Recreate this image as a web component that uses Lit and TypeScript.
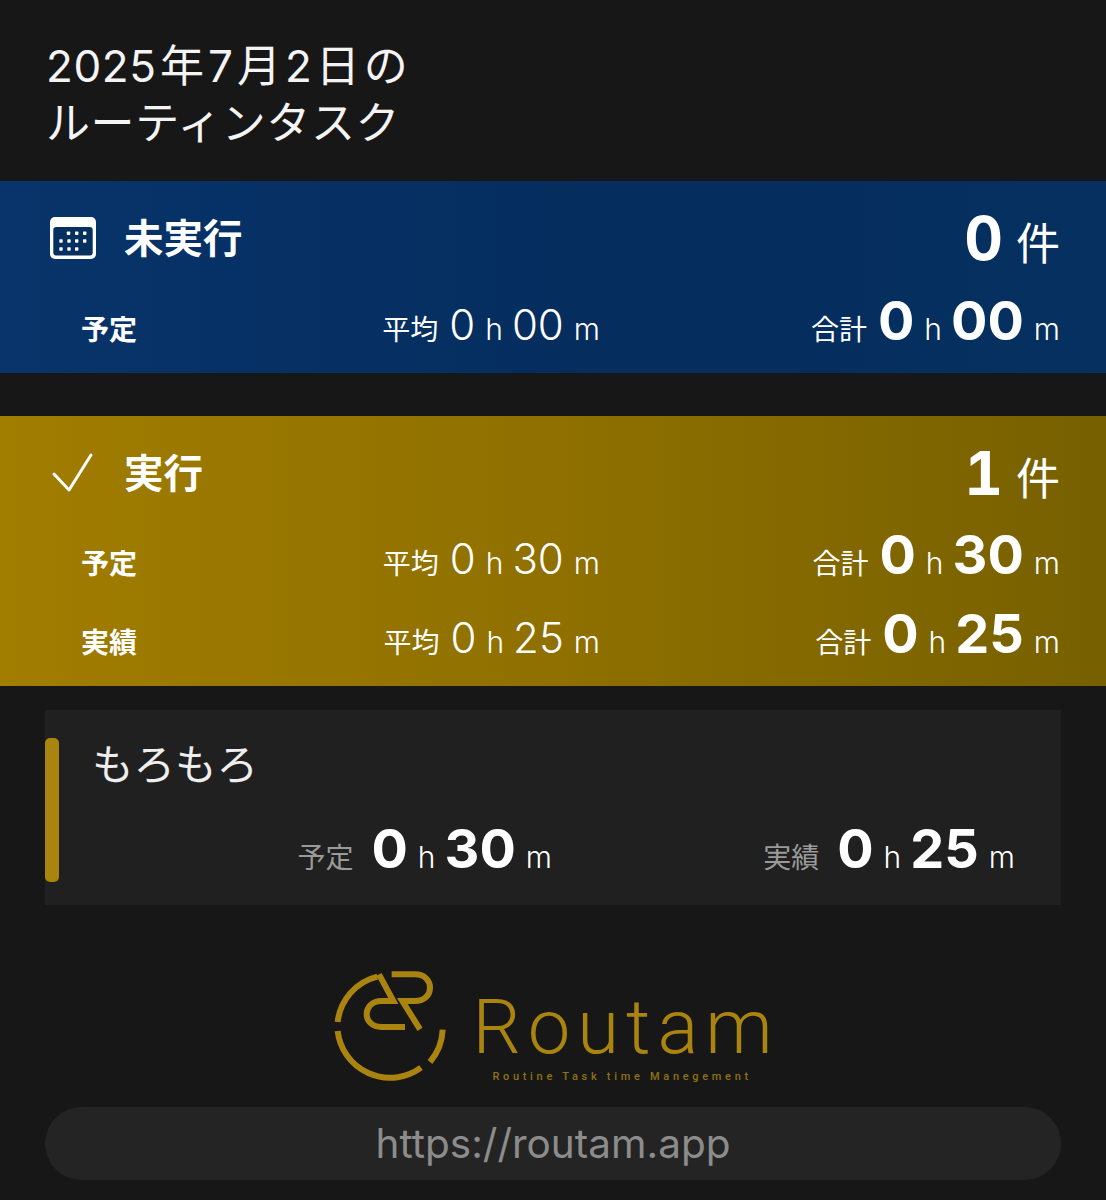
import { LitElement, html, css, svg } from 'lit';
import { customElement } from 'lit/decorators.js';

const calendarIcon = html`<svg class="icon" width="48" height="44" viewBox="0 0 48 44">
  <rect x="1" y="1" width="46" height="42" rx="5" fill="#fff"/>
  <rect x="4.3" y="11" width="39.4" height="28.5" rx="3" fill="#06305f"/>
  ${[
    [19.5, 17.3], [27.7, 17.3], [35.7, 17.3],
    [12, 25], [20, 25], [27.7, 25], [35.7, 25],
    [12, 33], [20, 33], [27.7, 33],
  ].map(([x, y]) => svg`<rect x=${x - 1.7} y=${y - 1.7} width="3.4" height="3.4" rx=".7" fill="#fff"/>`)}
</svg>`;

const checkIcon = html`<svg class="icon" width="48" height="44" viewBox="0 0 48 44">
  <path d="M5 23 L20 39 L42 4" fill="none" stroke="#fff" stroke-width="3" stroke-linecap="round" stroke-linejoin="round"/>
</svg>`;

// traced from the reference mark, coordinates are 3x px
const logoMark = html`<svg class="mark" width="120" height="120" viewBox="30 20 360 360">
  <g fill="none" stroke="#a9840f" stroke-width="18">
    <path d="M53 188 A158 158 0 0 1 172 52"/>
    <path d="M53 215 A158 158 0 0 0 303 325"/>
    <path d="M368 211 A158 158 0 0 1 330 308"/>
    <path d="M215 45 H285 C345 45 345 125 285 125 H247 L300 210"/>
    <path d="M177 45 L220 125 H185 C125 125 125 203 185 203 H255"/>
  </g>
</svg>`;

type Time = [string, string];

@customElement('app-root')
export class AppRoot extends LitElement {
  static styles = css`
    :host {
      display: block;
      height: 1200px;
      overflow: hidden;
      background: #171717;
      color: #fff;
      font-family: Inter, "Noto Sans CJK JP", sans-serif;
    }
    .title {
      margin: 0;
      padding: 38px 46px 29px;
      font-size: 44px;
      line-height: 57px;
      font-weight: 400;
      letter-spacing: 0.6px;
      color: #f4f4f4;
    }
    .title .sp { margin: 0 3.4px; }
    .band { display: flex; flex-direction: column; }
    .band.blue {
      background: linear-gradient(90deg, #08346b 0%, #052d5e 55%, #05305f 100%);
      margin-bottom: 43px;
      height: 192px;
    }
    .band.gold {
      background: linear-gradient(90deg, #a17d00 0%, #8f7000 50%, #776000 100%);
      height: 270px;
    }
    .head {
      flex: none;
      height: 114px;
      display: flex;
      align-items: center;
      padding: 0 46px 0 49px;
    }
    .head .icon { flex: none; }
    .head .name { margin: -5px 0 0 27px; font-size: 39.5px; font-weight: 700; }
    .head .count { margin-left: auto; display: flex; align-items: baseline; }
    .count b { font-size: 60px; font-weight: 700; font-variant-numeric: tabular-nums; }
    .count span { margin-left: 13px; font-size: 44px; font-weight: 400; }
    .band.blue .row { margin-top: -7px; }
    .band.gold .row { margin-top: -8px; }
    .band.gold .row + .row { margin-top: 23px; }
    .row {
      height: 56px;
      display: grid;
      grid-template-columns: 303px 216px 1fr;
      align-items: baseline;
      padding: 0 46px 0 81px;
    }
    .row .label { font-size: 28px; font-weight: 700; }
    .time { display: flex; align-items: baseline; justify-self: end; white-space: nowrap; }
    .time .cap { font-size: 28px; margin-right: 11px; }
    .time .num { font-size: 42px; font-weight: 350; }
    .time .unit { font-size: 30px; font-weight: 300; margin: 0 9px 0 10px; }
    .time .unit:last-child { margin-right: 0; }
    .time.big .num { font-size: 54px; font-weight: 700; }
    .card {
      margin: 24px 45px 0;
      height: 195px;
      background: #202020;
      display: flex;
    }
    .card .bar {
      flex: none;
      width: 14px;
      margin: 28px 0 23px;
      border-radius: 5px;
      background: #a9840f;
    }
    .card .body { flex: 1; padding-left: 33px; }
    .card .name {
      margin-top: 28px;
      font-size: 41.5px;
      line-height: 54px;
      font-weight: 400;
      color: #eee;
    }
    .card .times {
      margin-top: 24px;
      display: grid;
      grid-template-columns: 460px 463px;
    }
    .card .cap { color: #9a9a9a; margin-right: 18px; }
    .logo {
      margin-top: 61px;
      height: 128px;
      display: flex;
      justify-content: center;
      color: #a9840f;
      padding-left: 4px;
    }
    .logo .words { margin-left: 22px; display: flex; flex-direction: column; }
    .logo .big {
      font-size: 76px;
      line-height: 80px;
      margin-top: 21px;
      font-weight: 350;
      letter-spacing: 7px;
      font-family: Roboto, sans-serif;
    }
    .logo .small {
      font-size: 11px;
      line-height: 14px;
      letter-spacing: 3.7px;
      margin: 3px 0 0 20px;
      font-weight: 500;
      color: #8f7213;
      font-family: Roboto, sans-serif;
    }
    .url {
      margin: 13px 45px 0;
      height: 73px;
      border-radius: 37px;
      background: #242424;
      display: flex;
      align-items: center;
      justify-content: center;
      font-size: 40.5px;
      color: #8c8c8c;
    }
  `;

  private time(cap: string, [h, m]: Time, big = false) {
    return html`<div class="time ${big ? 'big' : ''}">
      <span class="cap">${cap}</span>
      <span class="num">${h}</span><span class="unit">h</span>
      <span class="num">${m}</span><span class="unit">m</span>
    </div>`;
  }

  private row(label: string, avg: Time, total: Time) {
    return html`<div class="row">
      <span class="label">${label}</span>
      ${this.time('平均', avg)}
      ${this.time('合計', total, true)}
    </div>`;
  }

  render() {
    return html`
      <h1 class="title">2025<span class="sp">年</span>7<span class="sp">月</span>2<span class="sp">日</span>の<br />ルーティンタスク</h1>

      <section class="band blue">
        <div class="head">
          ${calendarIcon}
          <span class="name">未実行</span>
          <div class="count"><b>0</b><span>件</span></div>
        </div>
        ${this.row('予定', ['0', '00'], ['0', '00'])}
      </section>

      <section class="band gold">
        <div class="head">
          ${checkIcon}
          <span class="name">実行</span>
          <div class="count"><b>1</b><span>件</span></div>
        </div>
        ${this.row('予定', ['0', '30'], ['0', '30'])}
        ${this.row('実績', ['0', '25'], ['0', '25'])}
      </section>

      <section class="card">
        <div class="bar"></div>
        <div class="body">
          <div class="name">もろもろ</div>
          <div class="times">
            ${this.time('予定', ['0', '30'], true)}
            ${this.time('実績', ['0', '25'], true)}
          </div>
        </div>
      </section>

      <div class="logo">
        ${logoMark}
        <div class="words">
          <span class="big">Routam</span>
          <span class="small">Routine Task time Manegement</span>
        </div>
      </div>

      <div class="url">https://routam.app</div>
    `;
  }
}
